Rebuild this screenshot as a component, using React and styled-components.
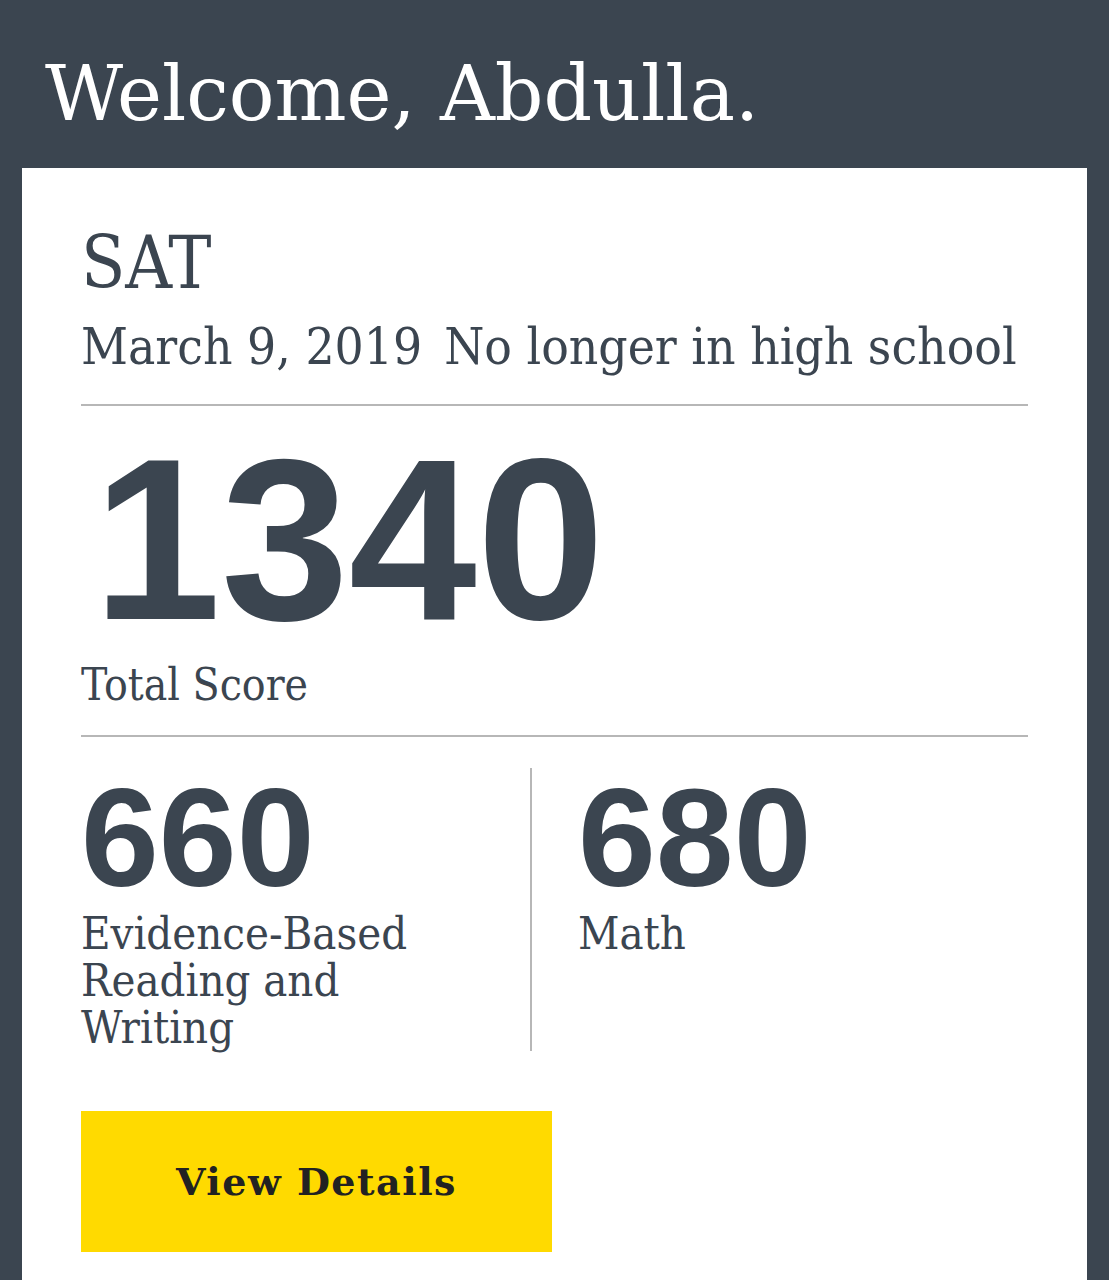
import React from "react";
import styled, { createGlobalStyle } from "styled-components";

const slab = `"DejaVu Serif Condensed", "DejaVu Serif", serif`;

const GlobalStyle = createGlobalStyle`
  html, body {
    margin: 0;
    padding: 0;
    background: #3b4550;
  }
  body {
    font-family: ${slab};
  }
`;

const Page = styled.div`
  padding: 0 22px;
  min-height: 1280px;
`;

const Greeting = styled.h1`
  margin: 0;
  padding: 56px 0 0 23px;
  box-sizing: border-box;
  height: 168px;
  font-family: "DejaVu Serif", serif;
  font-weight: 400;
  font-size: 76px;
  line-height: 1;
  color: #ffffff;
`;

const Card = styled.section`
  background: #ffffff;
  padding: 59px 59px 40px;
  color: #3b4550;
`;

const TestName = styled.div`
  font-size: 72px;
  line-height: 1;
`;

const Meta = styled.div`
  margin-top: 22px;
  display: flex;
  gap: 22px;
  font-size: 51px;
  line-height: 1;
  white-space: nowrap;
`;

const Rule = styled.hr`
  margin: ${(p) => p.$top}px 0 0;
  border: 0;
  height: 2px;
  background: #b7b7b7;
`;

const Score = styled.div`
  font-family: "Liberation Sans", Arial, sans-serif;
  font-weight: 700;
  font-size: ${(p) => p.$size}px;
  line-height: 1;
  margin-top: ${(p) => p.$top || 0}px;
  padding-left: ${(p) => p.$indent || 0}px;
`;

const Label = styled.div`
  font-size: ${(p) => p.$size || 45}px;
  line-height: 47px;
  margin-top: ${(p) => p.$top || 0}px;
`;

const Sections = styled.div`
  display: grid;
  grid-template-columns: 449px 1fr;
  margin-top: 31px;
`;

const Section = styled.div`
  padding-left: ${(p) => (p.$divided ? "46px" : "0")};
  border-left: ${(p) => (p.$divided ? "2px solid #b7b7b7" : "none")};
`;

const DetailsButton = styled.button`
  display: block;
  margin-top: 60px;
  width: 471px;
  height: 141px;
  border: 0;
  background: #ffda00;
  color: #222222;
  font-family: "DejaVu Serif", serif;
  font-weight: 700;
  font-size: 38px;
  letter-spacing: 1.5px;
  cursor: pointer;
`;

export default function App() {
  return (
    <Page>
      <GlobalStyle />
      <Greeting>Welcome, Abdulla.</Greeting>
      <Card>
        <TestName>SAT</TestName>
        <Meta>
          <span>March 9, 2019</span>
          <span>No longer in high school</span>
        </Meta>
        <Rule $top={32} />
        <Score $size={230} $top={19} $indent={12}>1340</Score>
        <Label $size={44} $top={6}>Total Score</Label>
        <Rule $top={27} />
        <Sections>
          <Section>
            <Score $size={140}>660</Score>
            <Label $top={2}>
              Evidence-Based
              <br />
              Reading and
              <br />
              Writing
            </Label>
          </Section>
          <Section $divided>
            <Score $size={140}>680</Score>
            <Label $top={2}>Math</Label>
          </Section>
        </Sections>
        <DetailsButton>View Details</DetailsButton>
      </Card>
    </Page>
  );
}
